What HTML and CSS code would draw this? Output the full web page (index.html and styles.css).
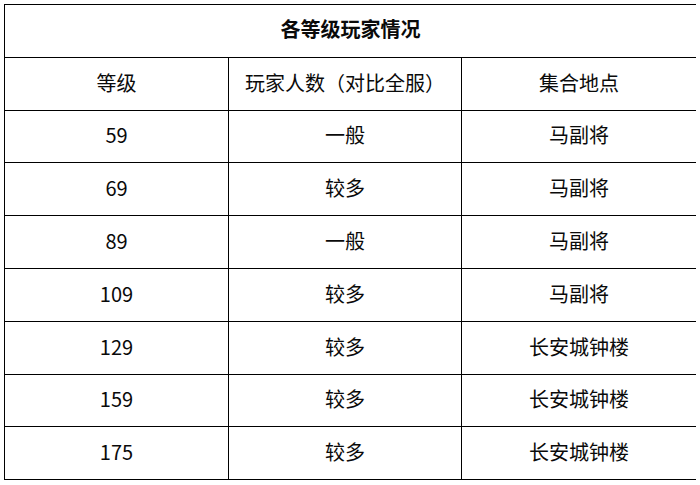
FILE: index.html
```html
<!DOCTYPE html>
<html lang="zh-CN">
<head>
<meta charset="utf-8">
<title>各等级玩家情况</title>
<link rel="stylesheet" href="styles.css">
</head>
<body>
<table class="levels">
  <colgroup>
    <col class="c1"><col class="c2"><col class="c3">
  </colgroup>
  <thead>
    <tr><th class="title" colspan="3">各等级玩家情况</th></tr>
    <tr class="head"><td>等级</td><td>玩家人数（对比全服）</td><td>集合地点</td></tr>
  </thead>
  <tbody>
    <tr><td>59</td><td>一般</td><td>马副将</td></tr>
    <tr><td>69</td><td>较多</td><td>马副将</td></tr>
    <tr><td>89</td><td>一般</td><td>马副将</td></tr>
    <tr><td>109</td><td>较多</td><td>马副将</td></tr>
    <tr><td>129</td><td>较多</td><td>长安城钟楼</td></tr>
    <tr><td>159</td><td>较多</td><td>长安城钟楼</td></tr>
    <tr><td>175</td><td>较多</td><td>长安城钟楼</td></tr>
  </tbody>
</table>
</body>
</html>
```
FILE: styles.css
```css
html, body {
  background: #ffffff;
}
body {
  margin: 4px;
  font-family: "Microsoft YaHei", "Noto Sans CJK SC", "Noto Sans", sans-serif;
  color: #0a0a0a;
}
.levels {
  border-collapse: collapse;
  table-layout: fixed;
  width: 692px;
  height: 476px;
}
.c1 { width: 224px; }
.c2 { width: 233px; }
.c3 { width: 235px; }
.levels th,
.levels td {
  border: 1px solid #000000;
  text-align: center;
  vertical-align: middle;
  padding: 0 0 2px 0;
  font-size: 20px;
  font-weight: 400;
  line-height: 1;
}
.levels th.title {
  font-weight: 700;
  font-size: 20px;
  padding-bottom: 4px;
}
.levels tr {
  height: 52.8px;
}
```
